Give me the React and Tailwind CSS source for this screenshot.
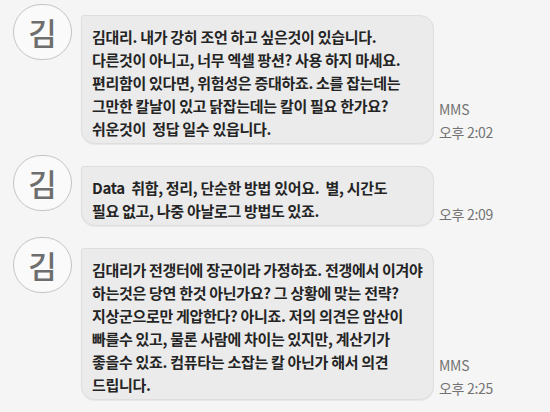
import React from 'react';

const messages = [
    {
        id: 1,
        lines: [
            '김대리. 내가 강히 조언 하고 싶은것이 있습니다.',
            '다른것이 아니고, 너무 엑셀 팡션? 사용 하지 마세요.',
            '편리함이 있다면, 위험성은 증대하죠. 소를 잡는데는',
            '그만한 칼날이 있고 닭잡는데는 칼이 필요 한가요?',
            '쉬운것이  정답 일수 있읍니다.',
        ],
        mms: true,
        time: '오후 2:02',
    },
    {
        id: 2,
        lines: [
            'Data  취합, 정리, 단순한 방법 있어요.  별, 시간도',
            '필요 없고, 나중 아날로그 방법도 있죠.',
        ],
        mms: false,
        time: '오후 2:09',
    },
    {
        id: 3,
        lines: [
            '김대리가 전갱터에 장군이라 가정하죠. 전갱에서 이겨야',
            '하는것은 당연 한것 아닌가요? 그 상황에 맞는 전략?',
            '지상군으로만 게압한다? 아니죠. 저의 의견은 암산이',
            '빠를수 있고, 물론 사람에 차이는 있지만, 계산기가',
            '좋을수 있죠. 컴퓨타는 소잡는 칼 아닌가 해서 의견',
            '드립니다.',
        ],
        mms: true,
        time: '오후 2:25',
    },
];

const Avatar = () => (
    <div className="w-[59px] h-[56px] shrink-0 rounded-full border-[1.5px] border-[#c4c4c4] bg-[#fafafa] flex items-center justify-center">
        <span className="text-[31px] leading-none font-medium text-[#6e6e6e] -mt-[2px]">김</span>
    </div>
);

const App = () => {
    return (
        <div
            className="w-[550px] h-[412px] overflow-hidden bg-[#f5f5f5] pt-[4px] pl-[13px] flex flex-col gap-[11px]"
            style={{ fontFamily: '"Noto Sans CJK KR", "Noto Sans", sans-serif' }}
        >
            {messages.map((msg) => (
                <div key={msg.id} className="flex items-start gap-[9px]">
                    <Avatar />
                    <div className="mt-[11px] flex items-end gap-[5px]">
                        <div className="w-[353px] bg-[#ebebeb] border border-[#dedede] rounded-[14px] rounded-tl-[3px] shadow-[0_1px_1px_rgba(0,0,0,0.06)] pl-[10px] pt-[9px] pb-[3px] text-[15px] leading-[23px] font-bold tracking-[-0.3px] text-[#242424] whitespace-pre">
                            {msg.lines.map((line, i) => (
                                <div key={i}>{line}</div>
                            ))}
                        </div>
                        <div className="text-[14px] leading-[23px] text-[#737373] tracking-[-0.3px]">
                            {msg.mms && <div>MMS</div>}
                            <div>{msg.time}</div>
                        </div>
                    </div>
                </div>
            ))}
        </div>
    );
};

export default App;
